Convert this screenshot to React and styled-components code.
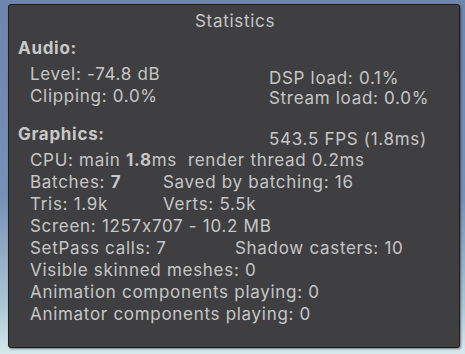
import React from "react";
import styled, { createGlobalStyle } from "styled-components";

const Global = createGlobalStyle`
  html, body { margin: 0; padding: 0; }
  body {
    width: 465px;
    height: 354px;
    overflow: hidden;
    background: linear-gradient(180deg, #6e85ad 0%, #7690b6 55%, #a9c3d3 85%, #d6e8ea 100%);
    font-family: Inter, "Noto Sans", sans-serif;
    font-feature-settings: "calt" 0;
  }
`;

const Panel = styled.div`
  box-sizing: border-box;
  margin: 4px 0 0 8px;
  width: 452px;
  height: 344px;
  background: #3f3f41;
  border: 1px solid #1e1e1e;
  border-radius: 3px;
  box-shadow: 1px 1px 2px rgba(0, 0, 0, 0.45);
  padding: 5px 9px 0 9px;
  color: #c6c6c6;
  font-size: 17px;
  letter-spacing: 0.7px;
  line-height: 22px;
`;

const Title = styled.div`
  text-align: center;
  height: 22px;
  padding-left: 2px;
`;

const Header = styled.div`
  font-weight: 700;
  height: 22px;
  margin-top: ${(p) => p.$top || 0}px;
  color: #c8c8c8;
`;

const HeaderRow = styled.div`
  display: flex;
  height: 26px;
  margin-top: ${(p) => p.$top || 0}px;
`;

const HeaderLabel = styled.span`
  font-weight: 700;
  color: #c8c8c8;
  width: 251px;
  height: 22px;
`;

const HeaderAside = styled.span`
  margin-top: 5px;
  height: 22px;
`;

const Columns = styled.div`
  display: grid;
  grid-template-columns: 239px 1fr;
  margin-top: 4px;
  padding-left: 12px;
`;

const Column = styled.div`
  display: flex;
  flex-direction: column;
  padding-top: ${(p) => p.$offset || 0}px;
  line-height: ${(p) => p.$lh || 22}px;
`;

const Lines = styled.div`
  display: flex;
  flex-direction: column;
  padding-left: 12px;
`;

const Line = styled.div`
  display: flex;
  height: 22px;
  white-space: pre;
`;

const Cell = styled.span`
  width: ${(p) => (p.$w ? `${p.$w}px` : "auto")};
  flex-shrink: 0;
  white-space: pre;
`;

const B = styled.b`
  font-weight: 700;
`;

export default function App() {
  return (
    <>
      <Global />
      <Panel>
        <Title>Statistics</Title>
        <Header $top={5}>Audio:</Header>
        <Columns>
          <Column>
            <span>Level: -74.8 dB</span>
            <span>Clipping: 0.0%</span>
          </Column>
          <Column $offset={5} $lh={20}>
            <span>DSP load: 0.1%</span>
            <span>Stream load: 0.0%</span>
          </Column>
        </Columns>
        <HeaderRow $top={15}>
          <HeaderLabel>Graphics:</HeaderLabel>
          <HeaderAside>543.5 FPS (1.8ms)</HeaderAside>
        </HeaderRow>
        <Lines>
          <Line>
            <span>CPU: main </span>
            <B>1.8</B>
            <span>ms  render thread 0.2ms</span>
          </Line>
          <Line>
            <Cell $w={133}>
              Batches: <B>7</B>
            </Cell>
            <Cell>Saved by batching: 16</Cell>
          </Line>
          <Line>
            <Cell $w={133}>Tris: 1.9k</Cell>
            <Cell>Verts: 5.5k</Cell>
          </Line>
          <Line>Screen: 1257x707 - 10.2 MB</Line>
          <Line>
            <Cell $w={205}>SetPass calls: 7</Cell>
            <Cell>Shadow casters: 10</Cell>
          </Line>
          <Line>Visible skinned meshes: 0</Line>
          <Line>Animation components playing: 0</Line>
          <Line>Animator components playing: 0</Line>
        </Lines>
      </Panel>
    </>
  );
}
